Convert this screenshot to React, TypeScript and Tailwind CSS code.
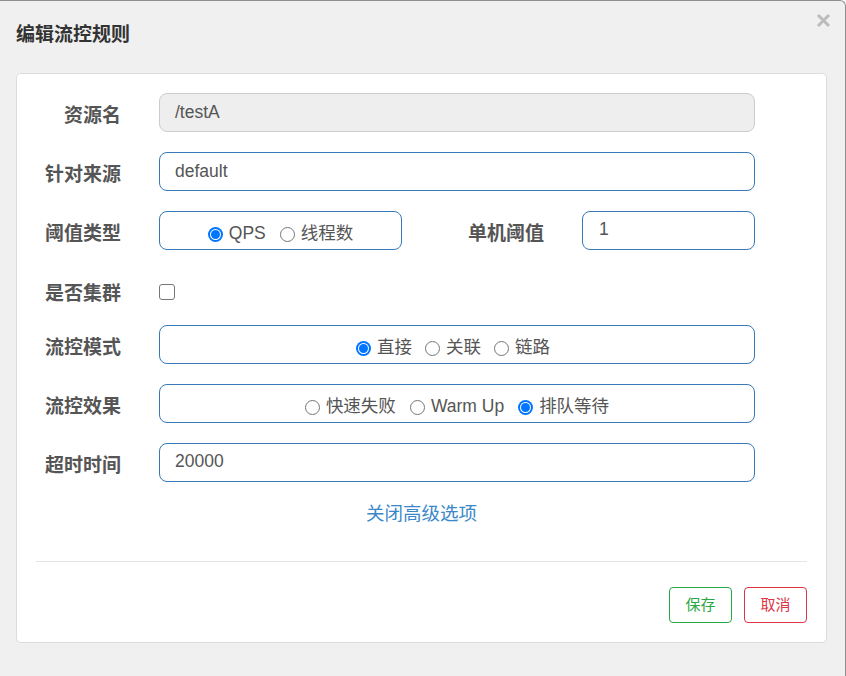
import React from "react";

const font = { fontFamily: '"Liberation Sans", "Noto Sans CJK SC", sans-serif' };

function Radio({ checked, label }: { checked?: boolean; label: string }) {
  return (
    <label className="flex items-center">
      {checked ? (
        <span className="w-[15px] h-[15px] rounded-full bg-[#0075ff] flex items-center justify-center">
          <span className="w-[11px] h-[11px] rounded-full bg-white flex items-center justify-center">
            <span className="w-[9px] h-[9px] rounded-full bg-[#0075ff]" />
          </span>
        </span>
      ) : (
        <span className="w-[15px] h-[15px] rounded-full border border-[#767676] bg-white" />
      )}
      <span className="ml-[6px] text-[17.5px] text-[#555] leading-none">{label}</span>
    </label>
  );
}

function Label({ children, w = "w-[85px]" }: { children: React.ReactNode; w?: string }) {
  return (
    <div className={`${w} shrink-0 text-right font-bold text-[19px] text-[#555] pt-[6px] leading-[24px]`}>
      {children}
    </div>
  );
}

export default function App() {
  return (
    <div
      style={font}
      className="w-[846px] h-[676px] bg-[#f0f0f0] border-t border-r border-[#8f8f8f] rounded-tr-[6px] relative overflow-hidden"
    >
      <div className="h-[72px] flex items-center pl-[16px] pb-[4px]">
        <span className="font-bold text-[19px] text-[#333]">编辑流控规则</span>
      </div>
      <svg className="absolute right-[14px] top-[12px]" width="15" height="15" viewBox="0 0 15 15">
        <path d="M2 2 L13 13 M13 2 L2 13" stroke="#bcbcbc" strokeWidth="3" strokeLinecap="butt" />
      </svg>

      <div className="mx-[16px] w-[811px] h-[570px] bg-white border border-[#dcdcdc] rounded-[5px] px-[19px] pt-[19px] flex flex-col">
        <div className="flex flex-col gap-[20px]">
          <div className="flex items-center">
            <Label>资源名</Label>
            <div className="ml-[38px] w-[596px] h-[39px] rounded-[8px] border border-[#cccccc] bg-[#eeeeee] flex items-center px-[15px] text-[17.5px] text-[#555]">
              /testA
            </div>
          </div>
          <div className="flex items-center">
            <Label>针对来源</Label>
            <div className="ml-[38px] w-[596px] h-[39px] rounded-[8px] border border-[#3779b9] bg-white flex items-center px-[15px] text-[17.5px] text-[#555]">
              default
            </div>
          </div>
          <div className="flex items-center">
            <Label>阈值类型</Label>
            <div className="ml-[38px] w-[243px] h-[39px] rounded-[8px] border border-[#3779b9] flex items-center justify-center gap-[14px] pt-[7px]">
              <Radio checked label="QPS" />
              <Radio label="线程数" />
            </div>
            <Label w="w-[142px]">单机阈值</Label>
            <div className="ml-[38px] w-[173px] h-[39px] rounded-[8px] border border-[#3779b9] bg-white flex items-center px-[16px] pb-[3px] text-[17.5px] text-[#555]">
              1
            </div>
          </div>
          <div className="flex items-center h-[35px] pt-[7px]">
            <Label>是否集群</Label>
            <span className="ml-[38px] mt-[2px] w-[16px] h-[16px] rounded-[3px] border border-[#767676] bg-white" />
          </div>
          <div className="flex items-center">
            <Label>流控模式</Label>
            <div className="ml-[38px] w-[596px] h-[39px] rounded-[8px] border border-[#3779b9] flex items-center justify-center gap-[13px] pr-[8px] pt-[7px]">
              <Radio checked label="直接" />
              <Radio label="关联" />
              <Radio label="链路" />
            </div>
          </div>
          <div className="flex items-center">
            <Label>流控效果</Label>
            <div className="ml-[38px] w-[596px] h-[39px] rounded-[8px] border border-[#3779b9] flex items-center justify-center gap-[14px] pt-[7px]">
              <Radio label="快速失败" />
              <Radio label="Warm Up" />
              <Radio checked label="排队等待" />
            </div>
          </div>
          <div className="flex items-center">
            <Label>超时时间</Label>
            <div className="ml-[38px] w-[596px] h-[39px] rounded-[8px] border border-[#3779b9] bg-white flex items-center px-[15px] pb-[2px] text-[17.5px] text-[#555]">
              20000
            </div>
          </div>
        </div>
        <div className="mt-[20px] h-[24px] leading-[24px] text-center text-[18.5px] text-[#3a87c9]">关闭高级选项</div>
        <div className="mt-[35px] h-px bg-[#e5e5e5]" />
        <div className="mt-[25px] flex justify-end gap-[12px]">
          <button className="w-[63px] h-[36px] rounded-[4px] border border-[#28a745] text-[#28a745] text-[15px] bg-white">
            保存
          </button>
          <button className="w-[63px] h-[36px] rounded-[4px] border border-[#dc3545] text-[#dc3545] text-[15px] bg-white">
            取消
          </button>
        </div>
      </div>
    </div>
  );
}
